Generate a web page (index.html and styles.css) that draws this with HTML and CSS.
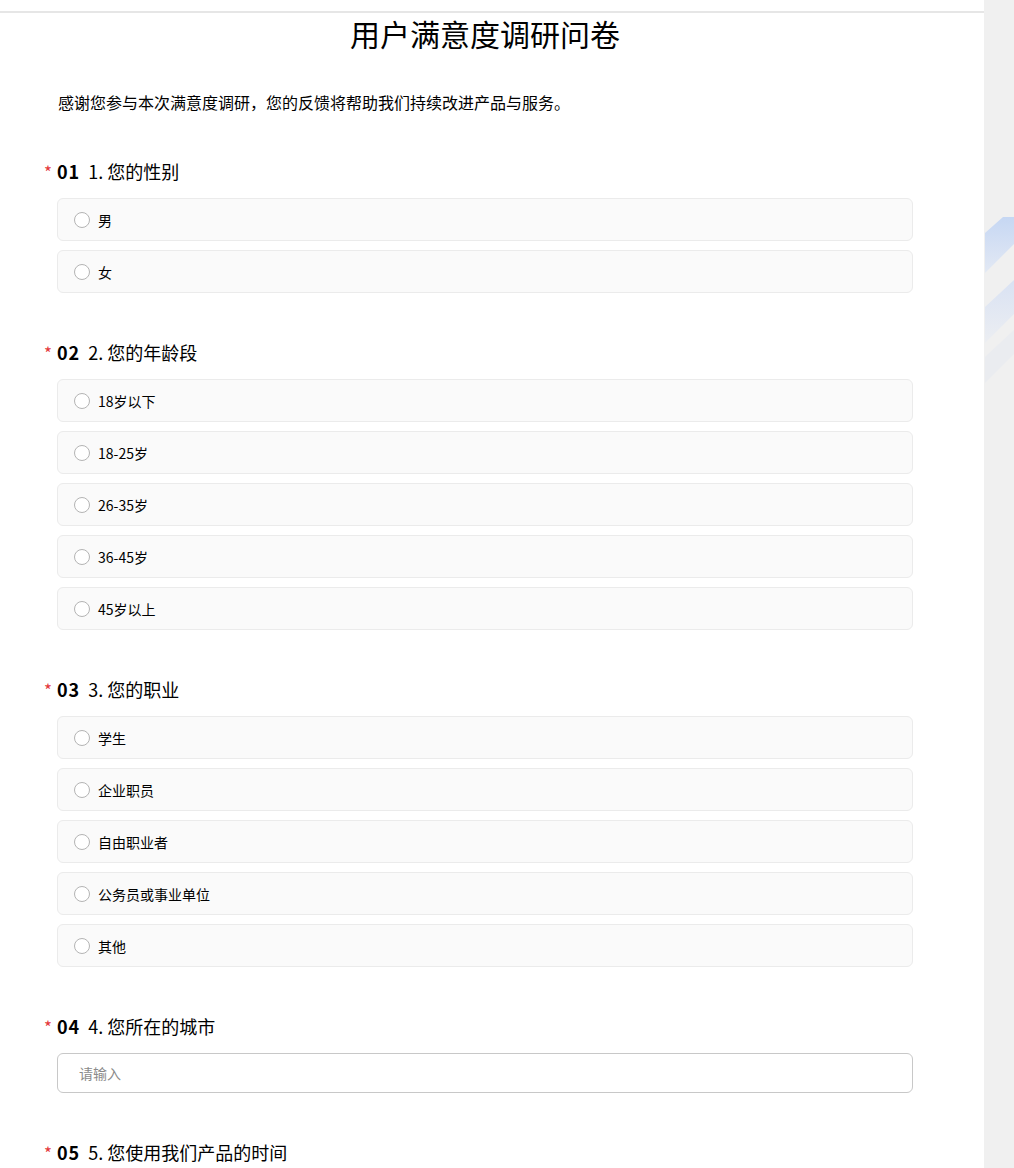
FILE: index.html
```html
<!DOCTYPE html>
<html lang="zh-CN">
<head>
  <meta charset="UTF-8">
  <title>用户满意度调研问卷</title>
  <meta name="viewport" content="width=device-width, initial-scale=1.0">
  <link rel="stylesheet" href="styles.css">
</head>
<body>
  <!-- 右侧装饰条纹 -->
  <svg class="decor" width="29" height="200" viewBox="0 0 29 200">
    <defs>
      <linearGradient id="g1" x1="0" y1="0" x2="0" y2="1">
        <stop offset="0" stop-color="#c6d7f3"/>
        <stop offset="1" stop-color="#e3e9f4"/>
      </linearGradient>
      <linearGradient id="g2" x1="0" y1="0" x2="0" y2="1">
        <stop offset="0" stop-color="#d9e2f3"/>
        <stop offset="1" stop-color="#eceef2"/>
      </linearGradient>
    </defs>
    <polygon points="0,33 18,17 29,17 29,44 0,73" fill="url(#g1)"/>
    <polygon points="0,107 29,80 29,114 0,143" fill="url(#g2)"/>
    <polygon points="0,157 29,130 29,154 0,183" fill="#eaecf0"/>
  </svg>

  <div class="page">
    <div class="topbar"></div>
    <h1 class="survey-title">用户满意度调研问卷</h1>
    <p class="intro">感谢您参与本次满意度调研，您的反馈将帮助我们持续改进产品与服务。</p>

    <div class="survey">
      <div class="question">
        <div class="q-title"><span class="req">*</span><span class="q-num">01</span><span>1. 您的性别</span></div>
        <div class="options">
          <label class="option"><span class="radio"></span>男</label>
          <label class="option"><span class="radio"></span>女</label>
        </div>
      </div>

      <div class="question">
        <div class="q-title"><span class="req">*</span><span class="q-num">02</span><span>2. 您的年龄段</span></div>
        <div class="options">
          <label class="option"><span class="radio"></span>18岁以下</label>
          <label class="option"><span class="radio"></span>18-25岁</label>
          <label class="option"><span class="radio"></span>26-35岁</label>
          <label class="option"><span class="radio"></span>36-45岁</label>
          <label class="option"><span class="radio"></span>45岁以上</label>
        </div>
      </div>

      <div class="question">
        <div class="q-title"><span class="req">*</span><span class="q-num">03</span><span>3. 您的职业</span></div>
        <div class="options">
          <label class="option"><span class="radio"></span>学生</label>
          <label class="option"><span class="radio"></span>企业职员</label>
          <label class="option"><span class="radio"></span>自由职业者</label>
          <label class="option"><span class="radio"></span>公务员或事业单位</label>
          <label class="option"><span class="radio"></span>其他</label>
        </div>
      </div>

      <div class="question">
        <div class="q-title"><span class="req">*</span><span class="q-num">04</span><span>4. 您所在的城市</span></div>
        <div class="options">
          <input class="text-input" type="text" placeholder="请输入">
        </div>
      </div>

      <div class="question">
        <div class="q-title"><span class="req">*</span><span class="q-num">05</span><span>5. 您使用我们产品的时间</span></div>
      </div>
    </div>
  </div>
</body>
</html>
```

FILE: styles.css
```css
html, body {
  margin: 0;
  padding: 0;
}

body {
  background-color: #f0f0f0;
  font-family: "Noto Sans CJK SC", "Noto Sans", sans-serif;
  color: #000;
  overflow: hidden;
}

.decor {
  position: absolute;
  top: 200px;
  left: 985px;
}

.page {
  width: 984px;
  height: 1168px;
  background-color: #fff;
  overflow: hidden;
}

.topbar {
  height: 11px;
  border-bottom: 2px solid #e6e6e6;
}

.survey-title {
  margin: 0;
  padding-right: 14px;
  font-size: 30px;
  font-weight: normal;
  line-height: 40px;
  text-align: center;
}

.intro {
  margin: 37px 0 0;
  padding-left: 58px;
  font-size: 16px;
  line-height: 24px;
}

.survey {
  padding: 45px 71px 0 42px;
}

.question {
  margin-bottom: 47px;
}

.q-title {
  display: flex;
  align-items: baseline;
  height: 24px;
  font-size: 18px;
  line-height: 24px;
  margin-bottom: 15px;
}

.req {
  width: 15px;
  padding-left: 2px;
  box-sizing: border-box;
  color: #e4393c;
  font-size: 17px;
}

.q-num {
  font-weight: bold;
  letter-spacing: 1px;
  margin-right: 8px;
}

.options {
  margin-left: 15px;
  display: flex;
  flex-direction: column;
  gap: 9px;
}

.option {
  display: flex;
  align-items: center;
  height: 43px;
  box-sizing: border-box;
  padding-left: 16px;
  background-color: #fafafa;
  border: 1px solid #ebebeb;
  border-radius: 6px;
  font-size: 14px;
  cursor: pointer;
}

.radio {
  width: 16px;
  height: 16px;
  box-sizing: border-box;
  border: 1px solid #b4b4b4;
  border-radius: 50%;
  background-color: #fff;
  margin-right: 8px;
}

.text-input {
  height: 40px;
  box-sizing: border-box;
  padding: 0 21px;
  border: 1px solid #c8c8c8;
  border-radius: 6px;
  font-family: inherit;
  font-size: 14px;
  outline: none;
}

.text-input::placeholder {
  color: #8a8a8a;
}
```
